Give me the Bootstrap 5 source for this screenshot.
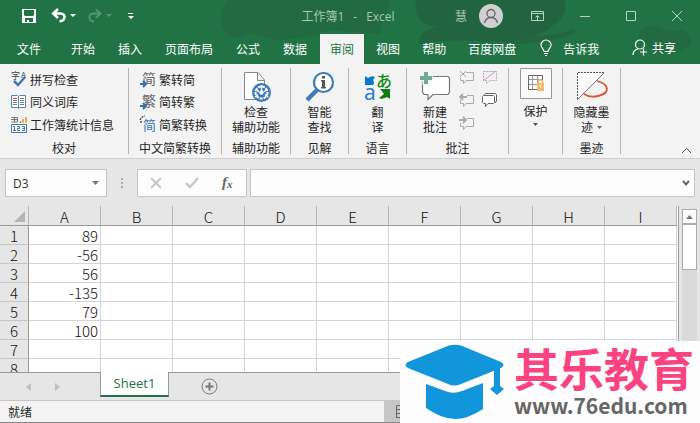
<!DOCTYPE html>
<html lang="zh-CN">
<head>
<meta charset="utf-8">
<meta name="viewport" content="width=device-width, initial-scale=1">
<title>工作簿1 - Excel</title>
<link href="https://cdn.jsdelivr.net/npm/bootstrap@5.3.0/dist/css/bootstrap.min.css" rel="stylesheet">
<style>
body{font-family:"Noto Sans CJK SC",sans-serif;font-size:12px;line-height:15px;color:#262626;background:#e6e6e6}
svg{display:block;flex:none;overflow:visible}
button{border:0;background:none;padding:0;color:inherit;font-size:12px;line-height:15px}
.app{height:100vh;overflow:hidden}
.top{background:#217346;color:#fff}
.deco{position:absolute;right:0;top:0;overflow:hidden}
.titlebar{height:34px;padding:0 18px 2px 22px}
.doc{color:#a3c9b2;gap:9px;font-family:"Open Sans","Noto Sans CJK SC",sans-serif;white-space:nowrap}
.side{flex:1 1 0}
.user{margin-right:28px}
.win{gap:36px;color:#b5d3c1}
.avatar{width:24px;height:24px;background:#d0d0d0}
.tabs{height:30px;padding:0 24px 0 7px}
.tabs button{height:30px;padding:0 10px 2px;margin-right:3px;white-space:nowrap}
.tabs .first{margin-right:10px}
.tabs .active{background:#f3f3f3;color:#217346}
.tabs .active,.tabs .active~button{margin-right:2px}
.ribbon{display:grid;grid-template-columns:129px 93px 69px 58px 58px 102px 54px 58px 1fr;background:#f3f3f3;padding:4px 0;border-bottom:1px solid #d0d0d0;height:95px}
.group{border-right:1px solid #b5b5b5;height:86px;white-space:nowrap}
.cmds{height:72px}
.caption{height:15px;text-align:center}
.rows{padding:0 0 0 11px}
.rows button{display:flex;align-items:center;gap:3px;height:23px}
.rows button:first-child{height:22px}
.big{display:flex;flex-direction:column;align-items:center;gap:1px;padding-top:3px}
.minis{display:grid;grid-template-columns:15px 15px;align-content:start;gap:8px;padding:2px 0 0}
.fbar{padding:10px 5px;gap:3px;height:47px}
.box{background:#fdfdfd;border:1px solid #c6c6c6;height:28px}
.namebox{width:102px;padding:0 7px}
.namebox input,.formula input{border:0;background:none;outline:0;padding:0;min-width:0;width:100%;font-family:"Open Sans",sans-serif;color:#333}
.fx{width:110px;padding:0 12px}
.sheet{min-height:0}
.gridwrap{overflow:hidden;min-width:0;border-right:1px solid #9a9a9a}
.cells{table-layout:fixed;border-collapse:separate;border-spacing:0;width:677px;font-size:15px;line-height:16px;color:#111}
.cells col.rh{width:29px}
.cells th,.cells td{padding:2px 0 0;height:19px;font-weight:300;overflow:hidden}
.cells thead th{background:#e6e6e6;text-align:center;height:20px;line-height:17px;border-bottom:1px solid #999;border-right:1px solid #b5b5b5}
.cells tbody th{background:#e6e6e6;text-align:center;border-right:1px solid #999;border-bottom:1px solid #c6c6c6}
.cells td{background:#fff;border-right:1px solid #d4d4d4;border-bottom:1px solid #d4d4d4;text-align:right;padding-right:2px}
.corner svg{margin-left:14px}
.scroll{width:15px;margin:3px 3px 0 3px;background:#dadada}
.scroll button{width:15px;height:15px;border:1px solid #ababab;background:#fff;display:flex;align-items:center;justify-content:center}
.thumb{height:46px;border:1px solid #ababab;background:#fff}
.sheetbar{height:28px;border-top:1px solid #999}
.sheetbar .arrows{width:100px;padding-left:26px;gap:24px}
.sheetbar .sheettab{width:69px;height:25px;margin-top:-1px;background:#fff;border:1px solid #999;border-width:0 1px 0;border-bottom:2px solid #217346;color:#217346;font:13px/15px "Open Sans",sans-serif}
.status{height:23px;background:#f3f3f3;border-top:1px solid #c6c6c6;border-bottom:1px solid #8a8a8a}
.status .ready{width:384px;padding-left:8px}
.status .views{background:#c6c6c6;padding-left:12px}
.brand{position:absolute;right:0;bottom:0;width:300px;height:82px;background:#fdfdfd;padding:4px 7px 3px 4px}
.brandname{font:700 45px/46px "Noto Sans CJK SC",sans-serif;color:#fb4381;white-space:nowrap}
.brandurl{font:700 21px/28px "Noto Sans CJK SC",sans-serif;color:#666;text-decoration:none}
</style>
<script src="https://cdn.jsdelivr.net/npm/bootstrap@5.3.0/dist/js/bootstrap.bundle.min.js"></script>
</head>
<body>
<div class="app d-flex flex-column position-relative">
<header class="top position-relative flex-shrink-0">
  <svg class="deco" width="480" height="64" viewBox="0 0 480 64"><g fill="#24633f"><path opacity=".55" d="M8 0Q-6 20 8 36Q20 40 30 32Q60 48 110 30L160 34L170 0Z"/><path opacity=".9" d="M196 0Q192 24 216 26Q196 34 200 44Q230 38 270 42Q320 40 332 26Q350 14 344 0Z"/><path opacity=".8" d="M286 34Q325 40 354 29Q360 36 325 41Q296 46 280 42Z"/><path opacity=".6" d="M418 38Q420 24 438 26Q450 34 462 30Q474 36 470 46Q450 56 440 52Z"/></g></svg>
  <div class="titlebar d-flex align-items-center position-relative">
    <div class="side d-flex align-items-center">
      <button aria-label="保存"><svg width="14" height="14" viewBox="0 0 14 14"><path fill="#fff" fill-rule="evenodd" d="M0 0H14V14H0ZM2 1V6L3 7H11L12 6V1ZM3 9V13H5V11H7V13H11V9Z"/></svg></button>
      <button class="ms-3" aria-label="撤消"><svg width="14" height="14" viewBox="0 0 14 14" fill="none" stroke="#fff" stroke-width="2.600"><path d="M1 4.500H8.500C14 4.500 14 12 7.500 12.300M6 0L1.300 4.500L6 9"/></svg></button>
      <svg class="ms-1" width="6" height="4"><path fill="#fff" d="M0 0H6L3 3Z"/></svg>
      <button class="ms-2 ps-1" aria-label="恢复"><svg width="14" height="14" viewBox="0 0 14 14" fill="none" stroke="#579471" stroke-width="2"><path d="M12.500 4.500H5.500C0 4.500 0 12 6 12.500M8 .5L12.500 4.500L8 8.500"/></svg></button>
      <svg class="ms-1" width="6" height="4"><path fill="#579471" d="M0 0H6L3 3Z"/></svg>
      <svg class="ms-3" width="6" height="7"><path fill="#fff" d="M0 0H5V1H0ZM0 3H6L3 6Z"/></svg>
    </div>
    <div class="doc d-flex me-2"><span>工作簿1</span><span>-</span><span>Excel</span></div>
    <div class="side d-flex align-items-center justify-content-end">
      <button class="user d-flex align-items-center"><span class="doc me-2 pe-1">慧</span><span class="avatar rounded-circle d-flex align-items-center justify-content-center"><svg width="16" height="16" fill="none" stroke="#666" stroke-width="1.300"><circle cx="8" cy="5.500" r="4"/><path d="M1.500 15Q3 9.500 8 9.500T14.500 15"/></svg></span></button>
      <div class="win d-flex align-items-center">
      <button aria-label="功能区显示选项"><svg width="13" height="10" fill="none" stroke="currentColor"><path d="M.5.5H12.500V9.500H.5ZM1 2.500H12M6.500 9V4.500M4.500 6.500L6.500 4.500L8.500 6.500"/></svg></button>
      <button aria-label="最小化"><svg width="10" height="10" stroke="currentColor"><path d="M0 5.500H10"/></svg></button>
      <button aria-label="最大化"><svg width="10" height="10" fill="none" stroke="currentColor"><path d="M.5.5H9.500V9.500H.5Z"/></svg></button>
      <button aria-label="关闭"><svg width="10" height="10" stroke="currentColor"><path d="M0 0L10 10M10 0L0 10"/></svg></button>
      </div>
    </div>
  </div>
  <nav class="tabs d-flex align-items-center position-relative">
    <button class="first">文件</button><button>开始</button><button>插入</button><button>页面布局</button><button>公式</button><button>数据</button><button class="active">审阅</button><button>视图</button><button>帮助</button><button>百度网盘</button>
    <button class="d-flex align-items-center"><svg class="me-2" width="17" height="18" fill="none" stroke="#fff" stroke-width="1.200"><path d="M6 12.500C6 10 3 9 3 6A5 5 0 0 1 13 6C13 9 10 10 10 12.500ZM6 14.500H10M7 16.500H9"/></svg>告诉我</button>
    <button class="d-flex align-items-center ms-auto p-0 pb-1 me-0"><svg class="me-1" width="16" height="17" fill="none" stroke="#fff" stroke-width="1.200"><circle cx="8" cy="5.500" r="4.500"/><path d="M1 16Q1 11 6 10M11.500 9.500V16.500M8 13H15"/></svg>共享</button>
  </nav>
</header>

<section class="ribbon flex-shrink-0">
  <div class="group"><div class="cmds rows">
    <button><svg width="16" height="16"><text x="0" y="8" font-size="9" fill="#444">字</text><text x="10" y="7" font-size="8" fill="#444">A</text><path d="M3 10L7 14L14 6" fill="none" stroke="#3d7ab8" stroke-width="2.500"/></svg>拼写检查</button>
    <button><svg width="16" height="14" fill="none"><path fill="#fff" stroke="#4d86bd" d="M.5.5H6.500L7.500 1.500L8.500.5H14.500V12.500H8.500L7.500 13.500L6.500 12.500H.5ZM7.500 1V13"/><path stroke="#777" d="M2 5.500H6M2 7.500H6M2 9.500H6M9 3.500H13M9 5.500H13M9 7.500H13M9 9.500H13"/><path stroke="#d43" d="M2 3.500H6"/></svg>同义词库</button>
    <button><svg width="16" height="16"><path fill="none" stroke="#777" d="M.5.5H6.500V5H.5M3.500 0V5M0 2.500H7"/><path fill="#e8b05b" d="M11 2H13V6H11ZM14 0H16V6H14Z"/><path fill="#777" d="M9 4H10V6H9Z"/><path fill="#fff" stroke="#3d7ab8" d="M.5 7.500H15.500V15.500H.5Z"/><path fill="none" stroke="#3d7ab8" d="M2 9.500H3.500V14M2 13.500H5M6 9.500H8.500V11.500H6.500V13.500H9M11 9.500H13.500V13.500H11M11.500 11.500H13"/></svg>工作簿统计信息</button>
  </div><div class="caption">校对</div></div>
  <div class="group"><div class="cmds rows">
    <button><svg width="16" height="17"><text x="2" y="13" font-size="14" fill="#666">简</text><path d="M0 13H6M3 10L6 13L3 16" fill="none" stroke="#2e74b5" stroke-width="2"/></svg>繁转简</button>
    <button><svg width="16" height="17"><text x="2" y="13" font-size="14" fill="#666">繁</text><path d="M0 13H6M3 10L6 13L3 16" fill="none" stroke="#2e74b5" stroke-width="2"/></svg>简转繁</button>
    <button><svg width="16" height="17"><path fill="none" stroke="#555" stroke-width="1.500" stroke-dasharray="2 1" d="M0 4Q2 0 5 0M1 5V8"/><text x="3" y="14" font-size="13" fill="#2e74b5">简</text></svg>简繁转换</button>
  </div><div class="caption">中文简繁转换</div></div>
  <div class="group"><div class="cmds"><button class="big w-100"><svg width="30" height="32"><path fill="#fff" stroke="#888" d="M3.500 1.500H17L23.500 9V28.500H3.500ZM16.500 2V9.500H23"/><circle cx="20.500" cy="21.500" r="9.500" fill="#3f7cb8"/><circle cx="20.500" cy="21.500" r="6" fill="none" stroke="#fff" stroke-width="2" stroke-dasharray="3 1"/><path stroke="#fff" stroke-width="1.300" d="M20.500 14V20M17 23.500L14 26M24 23.500L27 26M15 18L18 21M26 18L23 21"/><circle cx="20.500" cy="21.500" r="2.200" fill="#fff"/></svg><span>检查<br>辅助功能</span></button></div><div class="caption">辅助功能</div></div>
  <div class="group"><div class="cmds"><button class="big w-100"><svg width="30" height="32"><path stroke="#3f7cb8" stroke-width="4.500" d="M2 29L12 19"/><circle cx="18.500" cy="11.500" r="9.500" fill="#fff" stroke="#3f7cb8" stroke-width="2.200"/><path fill="#555" d="M17 5H20V7.500H17ZM16 9H20V16H21V17.500H16V16H17V10.500H16Z"/></svg><span>智能<br>查找</span></button></div><div class="caption">见解</div></div>
  <div class="group"><div class="cmds"><button class="big w-100"><svg width="28" height="32"><path fill="#0878d7" d="M1 5L4 7Q8 4 11 6L9 9Q11 12 9 14H1Z"/><text x="0" y="29" font-size="21" font-family="Noto Sans" fill="#1a80d9">a</text><text x="12" y="16" font-size="16" font-weight="500" fill="#168a1b">あ</text><path fill="#107c10" d="M16 18H26V28L23 26Q18 29 15 27L20 23Q18 20 16 18Z"/></svg><span>翻<br>译</span></button></div><div class="caption">语言</div></div>
  <div class="group"><div class="cmds d-flex"><button class="big ms-2 me-2 ps-1"><svg width="32" height="32"><path fill="#fff" stroke="#777" stroke-width="1.200" d="M4.500 5.500H29L30.500 7V21L29 23.500H14L9 28.500V23.500H5L3.500 21V6Z"/><path stroke="#f3f3f3" stroke-width="7" d="M7 0V14M0 7H14"/><path stroke="#72aa98" stroke-width="4" d="M7 1V13M1 7H13"/></svg><span>新建<br>批注</span></button>
    <div class="minis">
      <button aria-label="删除批注"><svg width="15" height="15" fill="none" stroke="#aaa"><path d="M7 2.500H14.500V10.500H7L4.500 13.500V10.500H1.500V8M1 1L7 7M7 1L1 7"/></svg></button>
      <button aria-label="隐藏批注"><svg width="15" height="15" fill="#f4edf4" stroke="#b0aab0"><path stroke-dasharray="2 1" d="M1.500 1.500H14.500V10.500H7L4.500 13.500V10.500H1.500Z"/><path d="M1 11L14 1"/></svg></button>
      <button aria-label="上一条批注"><svg width="15" height="15" fill="none" stroke="#aaa"><path d="M8 2.500H14.500V10.500H7L4.500 13.500V10.500H1.500V7"/><path stroke-width="1.800" d="M1 4H8M4 1L1 4L4 7"/></svg></button>
      <button aria-label="显示所有批注"><svg width="15" height="15" fill="#fff" stroke="#666"><path d="M2.500 3V1.500Q3 .5 4 .5H13.500L14.500 2V8L13 10"/><path d="M.5 3.500L1.500 2.500H11.500L12.500 3.500V9.500L11.500 10.500H6L3.500 13.500V10.500H1.500L.5 9.500Z"/></svg></button>
      <button aria-label="下一条批注"><svg width="15" height="15" fill="none" stroke="#aaa"><path d="M8 2.500H14.500V10.500H7L4.500 13.500V10.500H1.500V7"/><path stroke-width="1.800" d="M0 4H7M4 1L7 4L4 7"/></svg></button>
    </div></div><div class="caption">批注</div></div>
  <div class="group"><button class="w-100 d-flex flex-column align-items-center"><svg width="32" height="31"><path fill="#fafafa" stroke="#999" d="M.5.5H31.500V30.500H.5Z"/><path fill="none" stroke="#666" d="M8.500 7.500H22.500V21.500H8.500Z"/><path stroke="#999" d="M12.500 8V21M17.500 8V21M9 11.500H22M9 16.500H22"/><path fill="#edbd6c" d="M17 15H24V23H17Z"/><path fill="none" stroke="#edbd6c" stroke-width="1.500" d="M18.500 15V13Q20.500 10.500 22.500 13V15"/><path stroke="#fff" d="M20.500 17V20"/></svg><span class="pt-1">保护</span><svg class="mt-1" width="5" height="4"><path fill="#555" d="M0 1H5L2.500 4Z"/></svg></button></div>
  <div class="group"><div class="cmds"><button class="big w-100"><svg width="34" height="32"><path fill="#fff" d="M3 27V2H28Z"/><path fill="none" stroke="#555" stroke-dasharray="2 1" d="M2.500 28V1.500H29"/><path stroke="#777" d="M2 29L29 2"/><path fill="none" stroke="#d95432" stroke-width="1.800" d="M22 10C34 13 36 22 23 25Q15 27 9 23"/></svg><span>隐藏墨<br>迹<svg class="d-inline-block ms-1" width="5" height="7"><path fill="#666" d="M0 1H5L2.500 4Z"/></svg></span></button></div><div class="caption">墨迹</div></div>
  <div class="d-flex align-items-end justify-content-end pe-2"><button aria-label="折叠功能区"><svg width="11" height="7" fill="none" stroke="#555"><path d="M1 6L5.500 1.500L10 6"/></svg></button></div>
</section>

<div class="fbar d-flex flex-shrink-0">
  <div class="box namebox d-flex align-items-center"><input aria-label="名称框" value="D3"><svg width="7" height="5"><path fill="#777" d="M0 0H7L3.500 4Z"/></svg></div>
  <svg class="mx-1 mt-2" width="16" height="12"><path fill="#aaa" d="M7 1H9V3H7ZM7 5H9V7H7ZM7 9H9V11H7Z"/></svg>
  <div class="box fx d-flex align-items-center justify-content-between">
    <button aria-label="取消"><svg width="12" height="12" stroke="#c6c6c6" stroke-width="1.800"><path d="M1 1L11 11M11 1L1 11"/></svg></button>
    <button aria-label="输入"><svg width="14" height="12" fill="none" stroke="#c6c6c6" stroke-width="2.400"><path d="M1 6L5 10L13 1"/></svg></button>
    <button aria-label="插入函数"><svg width="13" height="15"><text x="1" y="11" font-family="Liberation Serif" font-style="italic" font-weight="700" font-size="15" fill="#666">f</text><text x="6" y="12" font-family="Liberation Serif" font-style="italic" font-weight="700" font-size="11" fill="#666">x</text></svg></button>
  </div>
  <div class="box formula d-flex align-items-center flex-grow-1 px-1"><input aria-label="编辑栏"><svg width="8" height="7" fill="none" stroke="#666" stroke-width="2"><path d="M1 1L4 4.500L7 1"/></svg></div>
</div>

<div class="sheet d-flex flex-grow-1">
  <div class="gridwrap flex-grow-1 bg-white">
  <table class="cells">
    <colgroup><col class="rh"><col><col><col><col><col><col><col><col><col></colgroup>
    <thead><tr><th class="corner"><svg width="11" height="11"><path fill="#b5b5b5" d="M11 0V11H0Z"/></svg></th><th>A</th><th>B</th><th>C</th><th>D</th><th>E</th><th>F</th><th>G</th><th>H</th><th>I</th></tr></thead>
    <tbody>
    <tr><th>1</th><td>89</td><td></td><td></td><td></td><td></td><td></td><td></td><td></td><td></td></tr>
    <tr><th>2</th><td>-56</td><td></td><td></td><td></td><td></td><td></td><td></td><td></td><td></td></tr>
    <tr><th>3</th><td>56</td><td></td><td></td><td></td><td></td><td></td><td></td><td></td><td></td></tr>
    <tr><th>4</th><td>-135</td><td></td><td></td><td></td><td></td><td></td><td></td><td></td><td></td></tr>
    <tr><th>5</th><td>79</td><td></td><td></td><td></td><td></td><td></td><td></td><td></td><td></td></tr>
    <tr><th>6</th><td>100</td><td></td><td></td><td></td><td></td><td></td><td></td><td></td><td></td></tr>
    <tr><th>7</th><td></td><td></td><td></td><td></td><td></td><td></td><td></td><td></td><td></td></tr>
    <tr><th>8</th><td></td><td></td><td></td><td></td><td></td><td></td><td></td><td></td><td></td></tr>
    </tbody>
  </table>
  </div>
  <div class="scroll flex-shrink-0"><button aria-label="向上滚动"><svg width="7" height="4"><path fill="#777" d="M0 4H7L3.500 0Z"/></svg></button><div class="thumb"></div></div>
</div>

<div class="sheetbar d-flex flex-shrink-0">
  <div class="arrows d-flex align-items-center"><svg width="5" height="8"><path fill="#c0c0c0" d="M5 0V8L0 4Z"/></svg><svg width="5" height="8"><path fill="#c0c0c0" d="M0 0V8L5 4Z"/></svg></div>
  <button class="sheettab">Sheet1</button>
  <button class="ms-4 ps-2" aria-label="新工作表"><svg width="17" height="17" fill="none" stroke="#777"><circle cx="8.500" cy="8.500" r="7.500"/><path stroke-width="2" d="M8.500 4.500V12.500M4.500 8.500H12.500"/></svg></button>
</div>
<footer class="status d-flex align-items-stretch flex-shrink-0">
  <div class="ready d-flex align-items-center">就绪</div>
  <div class="views flex-grow-1 d-flex align-items-center"><svg width="14" height="13" fill="none" stroke="#666"><path d="M.5.5H13.500V12.500H.5ZM0 4.500H14M0 8.500H14M4.500 0V13"/></svg></div>
</footer>

<aside class="brand d-flex">
  <svg width="102" height="76" viewBox="0 0 102 76"><g fill="#1296db"><path d="M45 .6Q51-1 57 .6L97 17Q102 20 97 23L57 39Q50 42 44 39L4 23Q-1 20 4 17Z"/><path d="M22 39L44 47Q51 49 58 46L79 38V64Q64 74 51 74T22 63Z"/><path d="M90 20H96V41L100 44L93 50L86 44L90 41Z"/></g></svg>
  <div class="d-flex flex-column ms-2"><div class="brandname">其乐教育</div><a class="brandurl" href="#">www.76edu.com</a></div>
</aside>
</div>
</body>
</html>
